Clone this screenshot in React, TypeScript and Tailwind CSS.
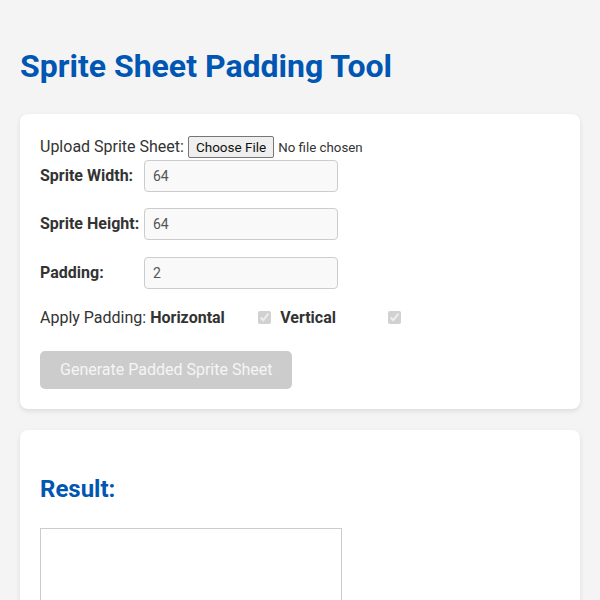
import React from 'react'

const labelCls = 'inline-block w-[100px] font-bold'
const inputCls =
  'w-[194px] h-[32px] px-2 border border-[#ccc] rounded-[4px] bg-[#f9f9f9] text-[14px] text-[#555] outline-none'

function Field({ label, value }: { label: string; value: string }) {
  return (
    <div className="flex items-center">
      <label className={labelCls}>{label}</label>
      <input type="number" defaultValue={value} className={`${inputCls} ml-[4px]`} />
    </div>
  )
}

export default function App() {
  return (
    <div
      className="min-h-screen bg-[#f4f4f4] px-5 pb-5 text-[16px] text-[#333]"
      style={{ fontFamily: 'Roboto, "Liberation Sans", sans-serif' }}
    >
      <h1 className="pt-[48px] mb-[28px] text-[32px] font-bold leading-[37.5px] text-[#0056b3]">
        Sprite Sheet Padding Tool
      </h1>

      {/* Settings card */}
      <div className="bg-white rounded-[8px] shadow-[0_2px_5px_rgba(0,0,0,0.1)] p-5">
        <div className="flex items-center h-[26px]">
          <label>Upload Sprite Sheet:</label>
          <input
            type="file"
            accept="image/*"
            className="ml-[4px] text-[13.3px] leading-[18px] file:mr-[4px] file:border file:border-[#767676] file:bg-[#efefef] file:rounded-[2px] file:px-[7px] file:py-[1px] file:text-[#111] file:text-[13.5px]"
          />
        </div>
        <div className="mb-[16px]">
          <Field label="Sprite Width:" value="64" />
        </div>
        <div className="mb-[17px]">
          <Field label="Sprite Height:" value="64" />
        </div>
        <Field label="Padding:" value="2" />

        <div className="flex items-center h-[20px] mt-[19px]">
          <span>Apply Padding:</span>
          <label className={`${labelCls} ml-[4px]`}>Horizontal</label>
          <input type="checkbox" defaultChecked disabled className="ml-[8px] w-[13px] h-[13px]" />
          <label className={`${labelCls} ml-[9px]`}>Vertical</label>
          <input type="checkbox" defaultChecked disabled className="ml-[8px] w-[13px] h-[13px]" />
        </div>

        <button
          disabled
          className="mt-[23px] h-[38px] px-5 pt-[1px] rounded-[5px] bg-[#ccc] text-[#f5f5f5] text-[16px]"
        >
          Generate Padded Sprite Sheet
        </button>
      </div>

      {/* Result card */}
      <div className="mt-[21px] bg-white rounded-[8px] shadow-[0_2px_5px_rgba(0,0,0,0.1)] p-5">
        <h2 className="mt-[25px] mb-[25px] text-[24px] font-bold leading-[28px] text-[#0056b3]">Result:</h2>
        <div className="w-[302px] h-[302px] border border-[#ccc]" />
      </div>
    </div>
  )
}
